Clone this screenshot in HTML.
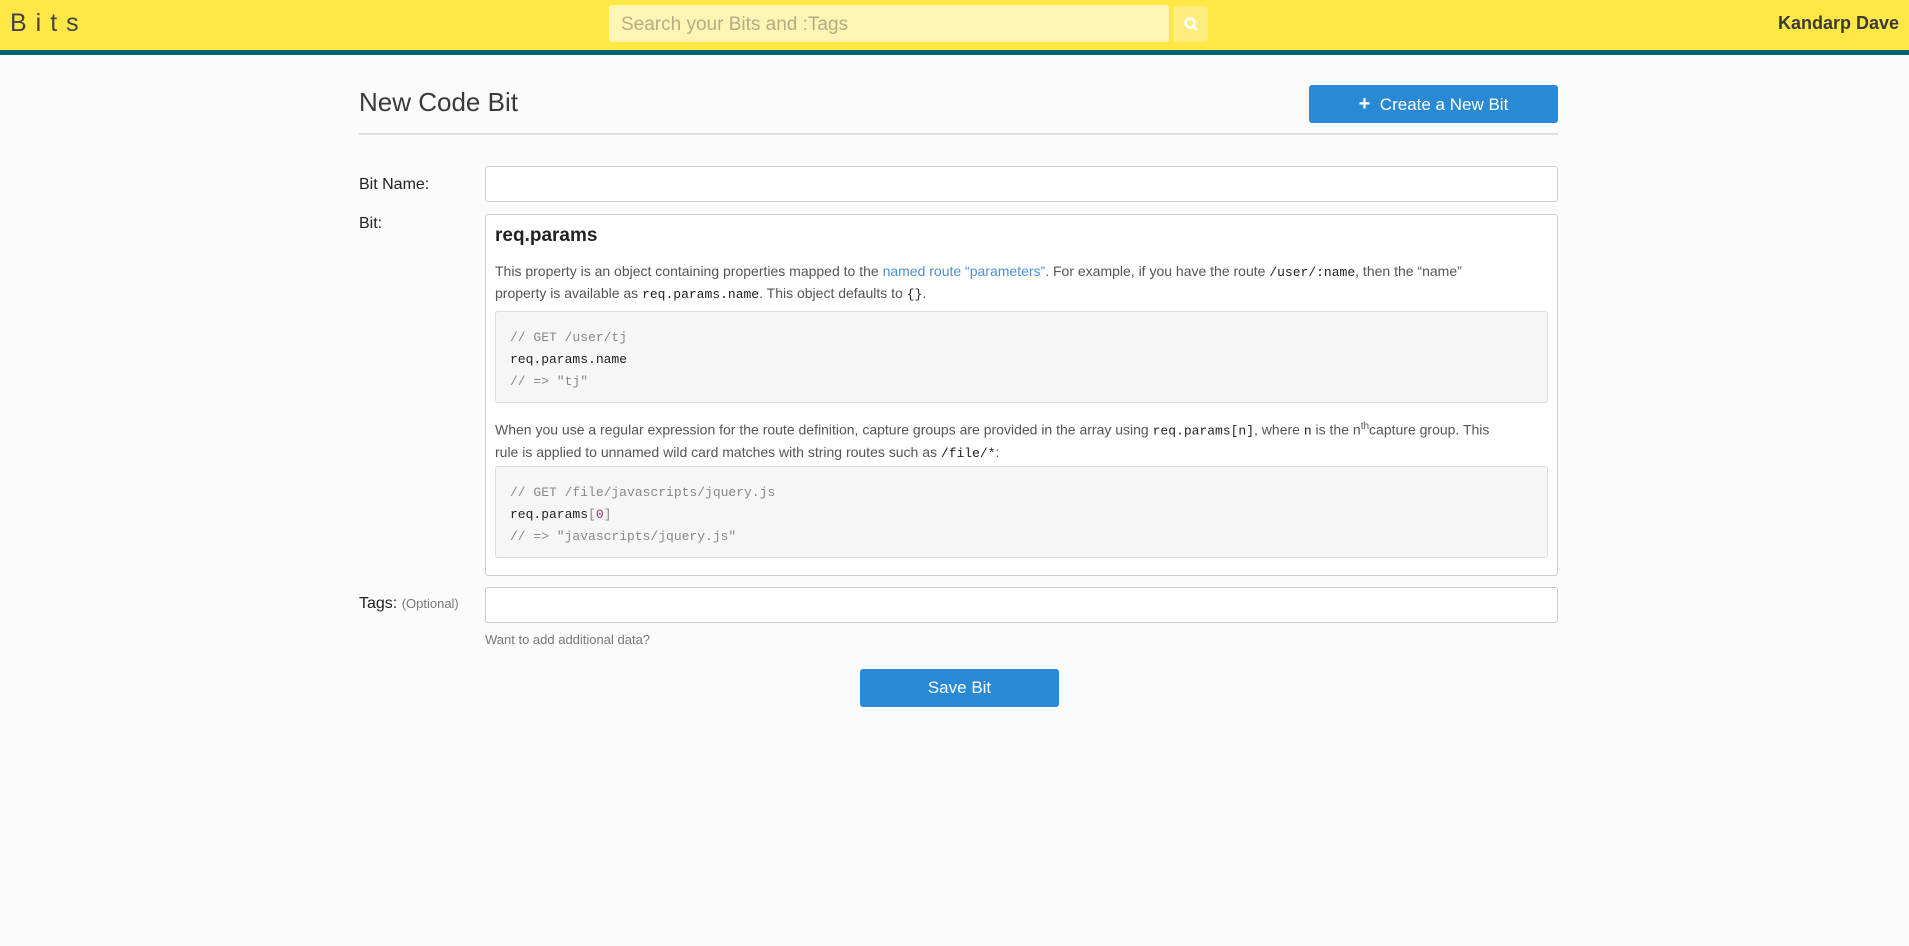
<!DOCTYPE html>
<html><head><meta charset="utf-8"><style>
*{box-sizing:border-box;margin:0;padding:0}
body{width:1909px;height:946px;background:#fbfbfb;font-family:"Liberation Sans",sans-serif;overflow:hidden;position:relative;color:#333}
.hdr{position:absolute;left:0;top:0;width:1909px;height:50px;background:#ffe746}
.teal{position:absolute;left:0;top:50px;width:1909px;height:5px;background:#00636f}
.logo{position:absolute;left:10px;top:9px;font-size:25px;letter-spacing:9px;color:#444;font-weight:300}
.search{position:absolute;left:609px;top:5px;width:560px;height:37px;background:#fff4b4;border-radius:3px;color:#b5ad85;font-size:19px;padding:9px 12px}
.sbtn{position:absolute;left:1173px;top:6px;width:35px;height:36px;background:#ffee7e;border-radius:3px}
.user{position:absolute;right:10px;top:13px;font-size:18px;font-weight:bold;color:#3a3a3a}
.title{position:absolute;left:359px;top:87px;font-size:26px;color:#3a3a3a}
.hr{position:absolute;left:359px;top:133px;width:1199px;height:2px;background:#e0e0e0}
.btn{position:absolute;background:#2889d5;color:#fff;border-radius:3px;text-align:center;font-size:17px}
.lbl{position:absolute;left:359px;font-size:16px;color:#222}
.inp{position:absolute;left:485px;width:1073px;background:#fff;border:1px solid #ccc;border-radius:3px}
.box{position:absolute;left:485px;top:214px;width:1073px;height:362px;background:#fff;border:1px solid #ccc;border-radius:3px}
.h{position:absolute;left:495px;top:225px;font-size:19px;font-weight:bold;color:#222}
.p{position:absolute;left:495px;font-size:14px;line-height:21px;color:#555;width:1000px}
.p a{color:#4a90d9;text-decoration:none}
code,.c{font-family:"Liberation Mono",monospace;font-size:13px;color:#222}
.cb{position:absolute;left:495px;width:1053px;background:#f6f6f6;border:1px solid #ddd;border-radius:3px;padding:15px 14px;font-family:"Liberation Mono",monospace;font-size:13px;line-height:22px;color:#222}
.cm{color:#888}
</style></head><body>
<div class="hdr"></div><div class="teal"></div>
<div class="logo">Bits</div>
<div class="search">Search your Bits and :Tags</div>
<div class="sbtn"><svg width="35" height="36" viewBox="0 0 35 36"><circle cx="17" cy="17" r="4.5" fill="none" stroke="#fff" stroke-width="2.5"/><line x1="20" y1="20" x2="23" y2="23" stroke="#fff" stroke-width="2.8" stroke-linecap="round"/></svg></div>
<div class="user">Kandarp Dave</div>
<div class="title">New Code Bit</div>
<div class="btn" style="left:1309px;top:85px;width:249px;height:38px;line-height:38px"><b style="font-size:20px">+</b>&nbsp; Create a New Bit</div>
<div class="hr"></div>
<div class="lbl" style="top:176px">Bit Name:</div>
<div class="inp" style="top:166px;height:36px"></div>
<div class="lbl" style="top:215px">Bit:</div>
<div class="box"></div>
<div class="h">req.params</div>
<div class="p" style="top:261px">This property is an object containing properties mapped to the <a>named route “parameters”</a>. For example, if you have the route <code>/user/:name</code>, then the “name” property is available as <code>req.params.name</code>. This object defaults to <code>{}</code>.</div>
<div class="cb" style="top:311px;height:92px"><span class="cm">// GET /user/tj</span><br>req.params.name<br><span class="cm">// =&gt; "tj"</span></div>
<div class="p" style="top:416px">When you use a regular expression for the route definition, capture groups are provided in the array using <code>req.params[n]</code>, where <code>n</code> is the n<sup style="font-size:10px">th</sup>capture group. This rule is applied to unnamed wild card matches with string routes such as <code>/file/*</code>:</div>
<div class="cb" style="top:466px;height:92px"><span class="cm">// GET /file/javascripts/jquery.js</span><br>req.params<span class="cm">[</span><span style="color:#a0306a">0</span><span class="cm">]</span><br><span class="cm">// =&gt; "javascripts/jquery.js"</span></div>
<div class="lbl" style="top:595px">Tags: <span style="font-size:13px;color:#777">(Optional)</span></div>
<div class="inp" style="top:587px;height:36px"></div>
<div style="position:absolute;left:485px;top:632px;font-size:13px;color:#777">Want to add additional data?</div>
<div class="btn" style="left:860px;top:669px;width:199px;height:38px;line-height:38px">Save Bit</div>
</body></html>
